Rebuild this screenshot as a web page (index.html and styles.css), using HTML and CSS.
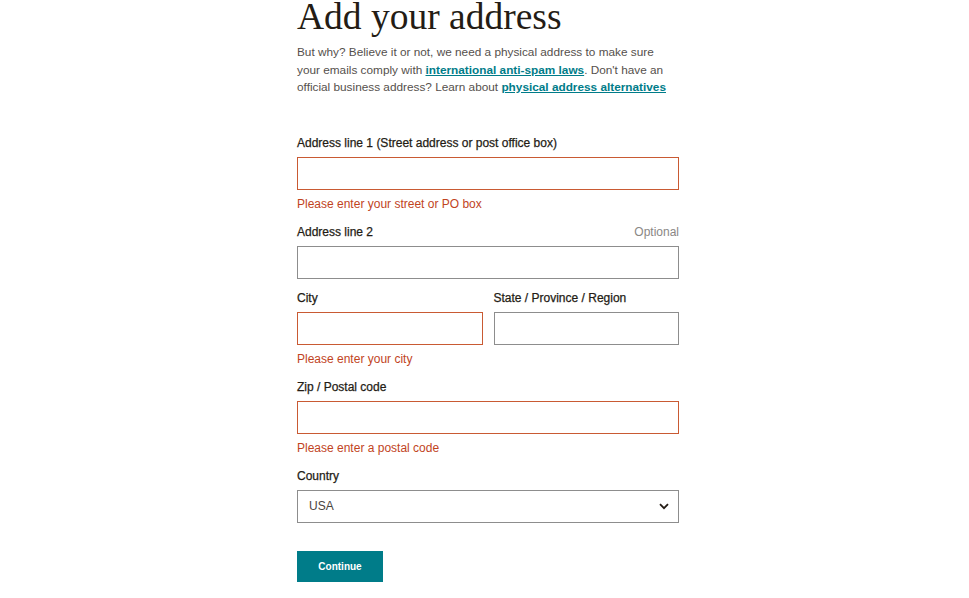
FILE: index.html
```html
<!DOCTYPE html>
<html lang="en">
<head>
    <meta charset="UTF-8">
    <meta name="viewport" content="width=device-width, initial-scale=1.0">
    <title>Add your address</title>
    <link rel="stylesheet" href="styles.css">
</head>
<body>
    <main class="address-form">
        <h1 class="title">Add your address</h1>
        <p class="intro">
            But why? Believe it or not, we need a physical address to make sure
            your emails comply with <a href="#">international anti-spam laws</a>. Don't have an
            official business address? Learn about <a href="#">physical address alternatives</a>
        </p>

        <form class="fields">
            <div class="field has-error">
                <label class="field-label">Address line 1 (Street address or post office box)</label>
                <input class="input" type="text">
                <p class="error">Please enter your street or PO box</p>
            </div>

            <div class="field">
                <div class="label-row">
                    <label class="field-label">Address line 2</label>
                    <span class="optional">Optional</span>
                </div>
                <input class="input" type="text">
            </div>

            <div class="field">
                <div class="split">
                    <div class="has-error">
                        <label class="field-label">City</label>
                        <input class="input" type="text">
                    </div>
                    <div>
                        <label class="field-label">State / Province / Region</label>
                        <input class="input" type="text">
                    </div>
                </div>
                <p class="error">Please enter your city</p>
            </div>

            <div class="field has-error">
                <label class="field-label">Zip / Postal code</label>
                <input class="input" type="text">
                <p class="error">Please enter a postal code</p>
            </div>

            <div class="field">
                <label class="field-label">Country</label>
                <div class="select">
                    <span>USA</span>
                    <svg width="10" height="7" viewBox="0 0 10 7"><path d="M1 1.2l4 4 4-4" fill="none" stroke="#241c15" stroke-width="1.8"/></svg>
                </div>
            </div>

            <button class="button" type="button">Continue</button>
        </form>
    </main>
</body>
</html>
```

FILE: styles.css
```css
body {
    margin: 0;
    background: #fff;
    color: #241c15;
    font-family: "Liberation Sans", Arial, sans-serif;
}

.address-form {
    width: 382px;
    margin-left: 297px;
}

.title {
    margin: 0;
    font-family: "Liberation Serif", "DejaVu Serif", serif;
    font-weight: 400;
    font-size: 37.5px;
    line-height: 34px;
    color: #241c15;
}

.intro {
    margin: 10px 0 0;
    font-size: 11.8px;
    line-height: 17.5px;
    color: #55504c;
}

.intro a {
    color: #007c89;
    font-weight: 700;
    text-decoration: underline;
}

.fields {
    margin-top: 37px;
}

.field {
    margin-bottom: 10px;
}

.field-label {
    display: block;
    font-size: 12px;
    line-height: 18px;
    color: #241c15;
    margin-bottom: 5px;
    -webkit-text-stroke: 0.25px #241c15;
}

.label-row {
    display: flex;
    justify-content: space-between;
    align-items: baseline;
}

.optional {
    font-size: 12px;
    color: #8a8785;
}

.input {
    display: block;
    box-sizing: border-box;
    width: 100%;
    height: 33px;
    margin: 0;
    border: 1px solid #8d8d8d;
    border-radius: 0;
    background: #fff;
}

.has-error .input {
    border-color: #c95a33;
}

.error {
    margin: 5px 0 0;
    font-size: 12px;
    line-height: 18px;
    color: #c1441e;
}

.has-error + .field,
.field:has(.error) + .field {
    margin-top: 1px;
}

.split {
    display: grid;
    grid-template-columns: 1fr 1fr;
    gap: 11px;
}

.select {
    box-sizing: border-box;
    height: 33px;
    border: 1px solid #8d8d8d;
    display: flex;
    align-items: center;
    justify-content: space-between;
    padding: 0 9px 0 11px;
    font-size: 12px;
    color: #4a4541;
}

.button {
    margin-top: 18px;
    width: 86px;
    height: 31px;
    border: 0;
    background: #007c89;
    color: #fff;
    font-family: "Liberation Sans", Arial, sans-serif;
    font-weight: 700;
    font-size: 10px;
    cursor: pointer;
}
```
